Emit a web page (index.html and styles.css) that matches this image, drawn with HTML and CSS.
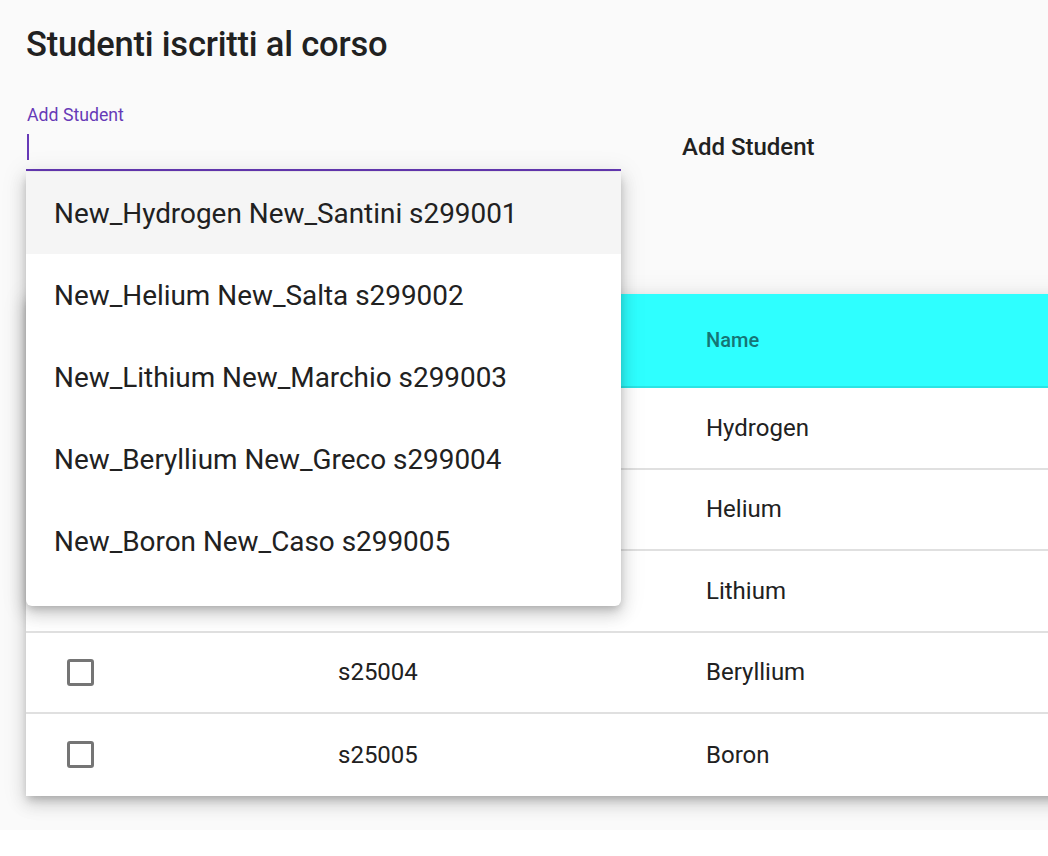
FILE: index.html
```html
<!DOCTYPE html>
<html lang="it">
<head>
<meta charset="utf-8">
<title>Studenti iscritti al corso</title>
<link rel="stylesheet" href="styles.css">
</head>
<body>
<div class="page">
  <h1 class="title">Studenti iscritti al corso</h1>
  <div class="form-row">
    <div class="field">
      <label class="field-label">Add Student</label>
      <div class="field-input"><span class="caret"></span></div>
      <div class="field-line"></div>
      <div class="panel">
        <div class="option active">New_Hydrogen New_Santini s299001</div>
        <div class="option">New_Helium New_Salta s299002</div>
        <div class="option">New_Lithium New_Marchio s299003</div>
        <div class="option">New_Beryllium New_Greco s299004</div>
        <div class="option">New_Boron New_Caso s299005</div>
      </div>
    </div>
    <button class="add-btn">Add Student</button>
  </div>
  <div class="table-card">
    <div class="trow head">
      <div class="cell check-cell"><span class="checkbox"></span></div>
      <div class="cell">Id</div>
      <div class="cell">Name</div>
    </div>
    <div class="trow">
      <div class="cell check-cell"><span class="checkbox"></span></div>
      <div class="cell">s25001</div>
      <div class="cell">Hydrogen</div>
    </div>
    <div class="trow">
      <div class="cell check-cell"><span class="checkbox"></span></div>
      <div class="cell">s25002</div>
      <div class="cell">Helium</div>
    </div>
    <div class="trow">
      <div class="cell check-cell"><span class="checkbox"></span></div>
      <div class="cell">s25003</div>
      <div class="cell">Lithium</div>
    </div>
    <div class="trow">
      <div class="cell check-cell"><span class="checkbox"></span></div>
      <div class="cell">s25004</div>
      <div class="cell">Beryllium</div>
    </div>
    <div class="trow last">
      <div class="cell check-cell"><span class="checkbox"></span></div>
      <div class="cell">s25005</div>
      <div class="cell">Boron</div>
    </div>
  </div>
</div>
</body>
</html>
```

FILE: styles.css
```css
html, body {
  margin: 0;
  padding: 0;
  background: #ffffff;
  overflow: hidden;
  font-family: Roboto, "Liberation Sans", Arial, sans-serif;
  color: #212121;
}

.page {
  background: #fafafa;
  height: 830px;
  padding: 0 0 0 26px;
  box-sizing: border-box;
  width: 1200px;
}

.title {
  margin: 0;
  padding-top: 22px;
  font-size: 34.5px;
  line-height: 44px;
  font-weight: 500;
  letter-spacing: -0.2px;
}

.form-row {
  display: flex;
  align-items: flex-start;
  margin-top: 37px;
}

.field {
  position: relative;
  width: 595px;
}

.field-label {
  display: block;
  margin-top: 2px;
  font-size: 17.7px;
  line-height: 20px;
  color: #673ab7;
  padding-left: 1px;
}

.field-input {
  height: 44px;
  display: flex;
  align-items: center;
}

.caret {
  display: block;
  width: 2px;
  height: 26px;
  margin-left: 1px;
  background: #673ab7;
}

.field-line {
  height: 2px;
  background: #673ab7;
}

.panel {
  position: absolute;
  top: 69px;
  left: 0;
  width: 595px;
  height: 434px;
  background: #ffffff;
  border-radius: 0 0 6px 6px;
  box-shadow: 0 4px 8px -2px rgba(0,0,0,.22), 0 8px 16px 2px rgba(0,0,0,.12), 0 3px 24px 4px rgba(0,0,0,.08);
  z-index: 10;
  overflow: hidden;
}

.option {
  height: 82px;
  display: flex;
  align-items: center;
  padding-left: 28px;
  font-size: 27.9px;
  color: #212121;
}

.option.active {
  background: #f5f5f5;
}

.add-btn {
  margin-left: 61px;
  margin-top: 29px;
  background: none;
  border: none;
  padding: 0;
  font-family: inherit;
  font-size: 24px;
  font-weight: 500;
  color: #212121;
  line-height: 30px;
}

.table-card {
  margin-top: 123px;
  width: 1100px;
  background: #ffffff;
  box-shadow: 0 5px 8px -2px rgba(0,0,0,.2), 0 8px 16px 1px rgba(0,0,0,.12), 0 3px 22px 3px rgba(0,0,0,.08);
}

.trow {
  display: grid;
  grid-template-columns: 312px 368px 1fr;
  height: 81.5px;
  align-items: center;
  border-bottom: 2px solid #e0e0e0;
  box-sizing: border-box;
  font-size: 24px;
}

.trow.last {
  border-bottom: none;
}

.trow.head {
  height: 94px;
  background: #2effff;
  color: #157575;
  font-size: 20px;
  font-weight: 500;
  border-bottom: 2px solid #2ae5e5;
}

.check-cell {
  padding-left: 41px;
  display: flex;
  align-items: center;
}

.checkbox {
  display: block;
  width: 27px;
  height: 27px;
  box-sizing: border-box;
  border: 3px solid #757575;
  border-radius: 3px;
}
```
